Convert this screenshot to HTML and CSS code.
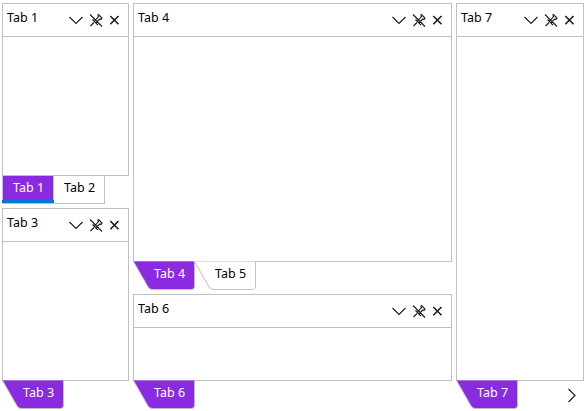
FILE: index.html
```html
<!DOCTYPE html>
<html lang="en">
<head>
<meta charset="utf-8">
<title>Docking tabs</title>
<link rel="stylesheet" href="styles.css">
</head>
<body>
<svg class="defs" aria-hidden="true">
  <symbol id="tools" viewBox="0 0 52 14">
    <path d="M1.500 4L8 10.500L14.500 4"/>
    <path d="M22 1.500L34 13.500M22.500 13L26 9.500M24.500 6.500L30 12M25.500 7.500L27.500 7L30.500 3.500L29.500 2.500M29.500 2.500L30.500 1.500L34 5L33 6.500L32 6L29 8.500L28.500 11"/>
    <path class="cross" d="M42.300 3L50.500 11.200M50.500 3L42.300 11.200"/>
  </symbol>
</svg>
<main class="dock">
  <div class="column side">
    <section class="group upper">
      <div class="panel"><header><span>Tab 1</span><svg class="tools"><use href="#tools"/></svg></header></div>
      <nav class="tabs"><span class="box active">Tab 1</span><span class="box">Tab 2</span></nav>
    </section>
    <section class="group">
      <div class="panel"><header><span>Tab 3</span><svg class="tools"><use href="#tools"/></svg></header></div>
      <nav class="tabs"><span class="slant active"><svg class="shape" viewBox="0 0 62 29"><path d="M.5 .5L14.500 25Q16.500 28.500 19 28.500H58.500Q61.500 28.500 61.500 25.500V.5"/></svg><b>Tab 3</b></span></nav>
    </section>
  </div>
  <div class="column middle">
    <section class="group tall">
      <div class="panel"><header><span>Tab 4</span><svg class="tools"><use href="#tools"/></svg></header></div>
      <nav class="tabs"><span class="slant active"><svg class="shape" viewBox="0 0 62 29"><path d="M.5 .5L14.500 25Q16.500 28.500 19 28.500H58.500Q61.500 28.500 61.500 25.500V.5"/></svg><b>Tab 4</b></span><span class="slant"><svg class="shape" viewBox="0 0 62 29"><path d="M.5 .5L14.500 25Q16.500 28.500 19 28.500H58.500Q61.500 28.500 61.500 25.500V.5"/></svg><b>Tab 5</b></span></nav>
    </section>
    <section class="group">
      <div class="panel"><header><span>Tab 6</span><svg class="tools"><use href="#tools"/></svg></header></div>
      <nav class="tabs"><span class="slant active"><svg class="shape" viewBox="0 0 62 29"><path d="M.5 .5L14.500 25Q16.500 28.500 19 28.500H58.500Q61.500 28.500 61.500 25.500V.5"/></svg><b>Tab 6</b></span></nav>
    </section>
  </div>
  <div class="column last">
    <section class="group">
      <div class="panel"><header><span>Tab 7</span><svg class="tools"><use href="#tools"/></svg></header></div>
      <nav class="tabs"><span class="slant active"><svg class="shape" viewBox="0 0 62 29"><path d="M.5 .5L14.500 25Q16.500 28.500 19 28.500H58.500Q61.500 28.500 61.500 25.500V.5"/></svg><b>Tab 7</b></span><svg class="next" viewBox="0 0 10 15"><path d="M1.500 1L8 7.500L1.500 14"/></svg></nav>
    </section>
  </div>
</main>
</body>
</html>
```
FILE: styles.css
```css
* { box-sizing: border-box; }

body {
  margin: 0;
  background: #fff;
  color: #000;
  font: 12.5px/16px "Noto Sans", "Open Sans", sans-serif;
}

.defs { display: none; }

.dock {
  display: flex;
  gap: 4px;
  height: 411px;
  padding: 3px 2px 2px;
}

.column {
  display: flex;
  flex-direction: column;
  gap: 4px;
}

.side { width: 127px; }
.middle { width: 319px; }
.last { width: 128px; }

.group {
  display: flex;
  flex: 1;
  flex-direction: column;
}

.upper { flex: 0 0 201px; }
.tall { flex: 0 0 287px; }

.panel {
  flex: 1;
  border: 1px solid #c0c0c0;
}

header {
  display: flex;
  justify-content: space-between;
  height: 33px;
  padding: 6px 8px 0 4px;
  border-bottom: 1px solid #c0c0c0;
}

.tools {
  width: 52px;
  height: 14px;
  margin-top: 3px;
  fill: none;
  stroke: #1a1a1a;
  stroke-width: 1.1;
}

.cross { stroke-width: 1.6; }

.tabs {
  display: flex;
  height: 28px;
}

.box {
  width: 51px;
  padding: 4px 0 0 10px;
  border: solid #c0c0c0;
  border-width: 0 1px 1px 0;
}

.box.active {
  position: relative;
  width: 52px;
  border-width: 0 1px 0 1px;
  background: #8a2be2;
  color: #fff;
}

.box.active::after {
  position: absolute;
  right: -1px;
  bottom: 1px;
  left: -1px;
  height: 3px;
  background: #0078d7;
  content: "";
}

.box.active {
  border-bottom: 1px solid #c0c0c0;
}

.box.active::after { bottom: 0; }

.slant {
  position: relative;
  width: 62px;
  height: 29px;
  margin-top: -1px;
  padding: 5px 0 0 21px;
}

.slant + .slant { margin-left: -1px; }

.slant b {
  position: relative;
  font-weight: 400;
}

.shape {
  position: absolute;
  inset: 0;
  width: 62px;
  height: 29px;
  fill: #fff;
  stroke: #c0c0c0;
}

.active .shape { fill: #8a2be2; }
.active b { color: #fff; }

.next {
  width: 10px;
  height: 15px;
  margin: 7px 7px 0 auto;
  fill: none;
  stroke: #222;
  stroke-width: 1.2;
}
```
